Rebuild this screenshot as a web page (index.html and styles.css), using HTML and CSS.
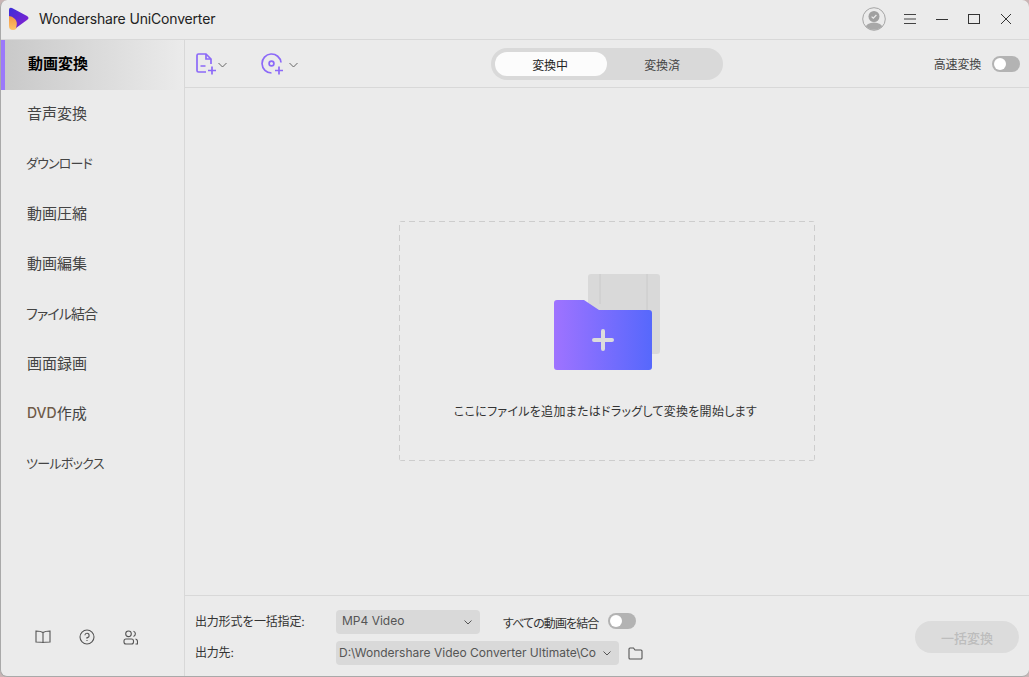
FILE: index.html
```html
<!DOCTYPE html>
<html lang="ja">
    <head>
        <meta charset="UTF-8">
        <meta name="viewport" content="width=device-width, initial-scale=1.0">
        <title>Wondershare UniConverter</title>
        <link rel="stylesheet" href="styles.css">
    </head>
    <body>
        <div class="app">
            <header class="titlebar">
                <svg class="logo" width="22" height="24" viewBox="0 0 22 24">
                    <defs>
                        <linearGradient id="logoOrange" x1="0" y1="0" x2="0" y2="1">
                            <stop offset="0" stop-color="#f08a3c"/>
                            <stop offset="1" stop-color="#fcc56a"/>
                        </linearGradient>
                        <linearGradient id="logoPurple" x1="0" y1="0" x2="1" y2="1">
                            <stop offset="0" stop-color="#3a2fd8"/>
                            <stop offset="1" stop-color="#8a1fd0"/>
                        </linearGradient>
                    </defs>
                    <path d="M1 6V19Q1 23 5 23Q9 23 9 19V10Z" fill="url(#logoOrange)"/>
                    <path d="M1 3Q1 0 4 1L19 9Q22 11 19 13L8 21Q10 15 7 12Q4 9 1 9Z" fill="url(#logoPurple)"/>
                </svg>
                <span class="app-name">Wondershare UniConverter</span>
                <div class="window-controls">
                    <svg class="avatar" width="24" height="24" viewBox="0 0 24 24">
                        <circle cx="12" cy="12" r="11.3" fill="#ebebeb" stroke="#a5a5a5"/>
                        <clipPath id="avatarClip"><circle cx="12" cy="12" r="10.8"/></clipPath>
                        <ellipse cx="12" cy="21" rx="8.500" ry="5.500" fill="#a8a8a8" clip-path="url(#avatarClip)"/>
                        <circle cx="12" cy="9.500" r="5.500" fill="#a0a0a0"/>
                        <path d="M9.600 9.600L11.300 11.200L14.400 8" fill="none" stroke="#ebebeb" stroke-width="1.200"/>
                    </svg>
                    <svg class="menu-icon" width="12" height="10" viewBox="0 0 12 10">
                        <path d="M0 .5H12M0 5H12M0 9.500H12" stroke="#444" fill="none"/>
                    </svg>
                    <svg class="min-icon" width="12" height="12" viewBox="0 0 12 12">
                        <path d="M0 6.500H12" stroke="#333" fill="none"/>
                    </svg>
                    <svg class="max-icon" width="12" height="10" viewBox="0 0 12 10">
                        <rect x=".5" y=".5" width="11" height="9" stroke="#333" fill="none"/>
                    </svg>
                    <svg class="close-icon" width="12" height="12" viewBox="0 0 12 12">
                        <path d="M1 1L11 11M11 1L1 11" stroke="#333" fill="none"/>
                    </svg>
                </div>
            </header>
            <div class="content">
                <aside class="sidebar">
                    <nav class="nav">
                        <a class="nav-item active">動画変換</a>
                        <a class="nav-item">音声変換</a>
                        <a class="nav-item kana download">ダウンロード</a>
                        <a class="nav-item">動画圧縮</a>
                        <a class="nav-item">動画編集</a>
                        <a class="nav-item kana merge">ファイル結合</a>
                        <a class="nav-item">画面録画</a>
                        <a class="nav-item dvd"><b>DVD</b>作成</a>
                        <a class="nav-item kana toolbox">ツールボックス</a>
                    </nav>
                    <div class="side-icons">
                        <svg width="16" height="14" viewBox="0 0 16 14">
                            <path d="M8 2.500C6.500 1.500 3.500 1 1 1V12C3.500 12 6.500 12 8 12.500C9.500 12 12.500 12 15 12V1C12.500 1 9.500 1.500 8 2.500V13" fill="none" stroke="#555" stroke-width="1.100"/>
                        </svg>
                        <svg width="16" height="16" viewBox="0 0 16 16">
                            <circle cx="8" cy="8" r="7" fill="none" stroke="#555" stroke-width="1.100"/>
                            <path d="M5.900 6.300A2.100 2.100 0 1 1 8 8.500V9.800M8 11V12" fill="none" stroke="#555" stroke-width="1.100"/>
                        </svg>
                        <svg width="15" height="15" viewBox="0 0 15 15">
                            <circle cx="5.500" cy="3.800" r="2.800" fill="none" stroke="#555" stroke-width="1.100"/>
                            <rect x="1" y="9" width="9.500" height="5" rx="2" fill="none" stroke="#555" stroke-width="1.100"/>
                            <path d="M10.500 1.200A2.800 2.800 0 0 1 10.500 6.500M12.500 9C14 9.300 14.500 10.500 14.500 11.500V14H12.500" fill="none" stroke="#555" stroke-width="1.100"/>
                        </svg>
                    </div>
                </aside>
                <main class="main">
                    <div class="toolbar">
                        <div class="add-buttons">
                            <button class="icon-button add-file">
                                <svg width="21" height="22" viewBox="0 0 21 22">
                                    <path d="M10 19H2.500Q1 19 1 17.500V2.500Q1 1 2.500 1H10L15 6V11" fill="none" stroke="#8c69f8" stroke-width="1.700"/>
                                    <path d="M10 1V6H15M4.500 13H9.500M12 17.500H20M16 13.500V21.500" fill="none" stroke="#8c69f8" stroke-width="1.700"/>
                                </svg>
                                <svg class="chevron" width="9" height="6" viewBox="0 0 9 6"><path d="M.5 1L4.500 5L8.500 1" fill="none" stroke="#666"/></svg>
                            </button>
                            <button class="icon-button add-disc">
                                <svg width="23" height="22" viewBox="0 0 23 22">
                                    <path d="M20 9.500A9.500 9.500 0 1 0 10.500 20" fill="none" stroke="#8c69f8" stroke-width="1.700"/>
                                    <circle cx="10.500" cy="10.500" r="2.400" fill="none" stroke="#8c69f8" stroke-width="1.700"/>
                                    <path d="M14 17.500H22M18 13.500V21.500" fill="none" stroke="#8c69f8" stroke-width="1.700"/>
                                </svg>
                                <svg class="chevron" width="9" height="6" viewBox="0 0 9 6"><path d="M.5 1L4.500 5L8.500 1" fill="none" stroke="#666"/></svg>
                            </button>
                        </div>
                        <div class="tabs">
                            <span class="tab selected">変換中</span>
                            <span class="tab">変換済</span>
                        </div>
                        <div class="speed">
                            <span>高速変換</span>
                            <span class="switch"></span>
                        </div>
                    </div>
                    <div class="drop-area">
                        <div class="drop-box">
                            <svg class="folder" width="108" height="98" viewBox="0 0 108 98">
                                <defs>
                                    <linearGradient id="folderFill" x1="0" y1="0" x2="1" y2="0">
                                        <stop offset="0" stop-color="#9f73ff"/>
                                        <stop offset="1" stop-color="#5668fc"/>
                                    </linearGradient>
                                </defs>
                                <rect x="34" y="0" width="72" height="80" rx="3" fill="#d9d9d9"/>
                                <path d="M46 0V30M93 0V68" stroke="#cacaca" fill="none"/>
                                <path d="M0 29Q0 26 3 26H30L45 36H95Q98 36 98 39V93Q98 96 95 96H3Q0 96 0 93Z" fill="url(#folderFill)"/>
                                <path d="M40 66H58M49 57V75" stroke="#dcdcdc" stroke-width="4" stroke-linecap="round" fill="none"/>
                            </svg>
                            <p class="drop-text">ここにファイルを追加またはドラッグして変換を開始します</p>
                        </div>
                    </div>
                    <footer class="footer">
                        <div class="footer-labels">
                            <span>出力形式を一括指定:</span>
                            <span>出力先:</span>
                        </div>
                        <div class="footer-fields">
                            <div class="field-row">
                                <div class="select format">
                                    <span>MP4 Video</span>
                                    <svg width="8" height="5" viewBox="0 0 8 5"><path d="M.5 .5L4 4L7.500 .5" fill="none" stroke="#555"/></svg>
                                </div>
                                <span class="merge-label">すべての動画を結合</span>
                                <span class="switch"></span>
                            </div>
                            <div class="field-row">
                                <div class="select path">
                                    <span>D:\Wondershare Video Converter Ultimate\Co</span>
                                    <svg width="8" height="5" viewBox="0 0 8 5"><path d="M.5 .5L4 4L7.500 .5" fill="none" stroke="#555"/></svg>
                                </div>
                                <svg class="folder-icon" width="15" height="13" viewBox="0 0 15 13">
                                    <path d="M1 2Q1 1 2 1H5.500L7 3H13Q14 3 14 4V11Q14 12 13 12H2Q1 12 1 11Z" fill="none" stroke="#555" stroke-width="1.100"/>
                                </svg>
                            </div>
                        </div>
                        <button class="convert-all" disabled>一括変換</button>
                    </footer>
                </main>
            </div>
        </div>
    </body>
</html>
```

FILE: styles.css
```css
:root{
    --bg: #ebebeb;
    --line: #d8d8d8;
    --pill: #d9d9d9;
    --purple: #9b78fb;
    --dash: #cdcdcd;
}
*{
    box-sizing: border-box;
}
html, body{
    margin: 0;
    height: 100%;
    background-color: #c9b5b5;
}
body{
    font-family: Inter, "Noto Sans CJK JP", sans-serif;
    font-size: 12px;
    color: #333;
    overflow: hidden;
}
.app{
    display: flex;
    flex-direction: column;
    width: 1029px;
    height: 677px;
    background-color: var(--bg);
    border-left: 1px solid #a9a9a9;
    border-bottom: 1px solid #a9a9a9;
    border-radius: 7px;
    overflow: hidden;
}

/* title bar */
.titlebar{
    display: flex;
    align-items: center;
    flex: none;
    height: 40px;
    padding: 0 17px 2px 7px;
    border-bottom: 1px solid var(--line);
}
.logo{
    margin-right: 9px;
}
.app-name{
    font-size: 14px;
    letter-spacing: -.17px;
    color: #222;
}
.window-controls{
    display: flex;
    align-items: center;
    margin-left: auto;
}
.avatar{
    margin-right: 18px;
}
.menu-icon,
.min-icon,
.max-icon{
    margin-right: 20px;
}

/* sidebar */
.content{
    display: flex;
    flex: 1;
    min-height: 0;
}
.sidebar{
    display: flex;
    flex-direction: column;
    flex: none;
    width: 184px;
    border-right: 1px solid var(--line);
}
.nav{
    display: flex;
    flex-direction: column;
}
.nav-item{
    display: flex;
    align-items: center;
    height: 50px;
    padding: 0 0 5px 26px;
    font-size: 15px;
    color: #444;
}
.nav-item.kana{
    padding-left: 25px;
    font-feature-settings: "palt";
}
.nav-item.download{
    font-size: 13px;
    letter-spacing: -.8px;
}
.nav-item.merge{
    font-size: 14px;
    letter-spacing: -.9px;
}
.nav-item.toolbox{
    font-size: 13px;
    letter-spacing: -.7px;
}
.nav-item.active{
    padding-left: 23px;
    border-left: 4px solid var(--purple);
    background: linear-gradient(90deg, #c9c9c9, #ebebeb);
    font-weight: 700;
    color: #000;
}
.dvd b{
    font-size: 14px;
    font-weight: 500;
    color: #6f5a48;
}
.side-icons{
    display: flex;
    align-items: center;
    gap: 28px;
    margin-top: auto;
    padding: 0 0 31px 34px;
}

/* toolbar */
.main{
    display: flex;
    flex-direction: column;
    flex: 1;
    min-width: 0;
}
.toolbar{
    position: relative;
    display: flex;
    align-items: center;
    justify-content: space-between;
    flex: none;
    height: 48px;
    padding: 0 9px 0 11px;
    border-bottom: 1px solid var(--line);
}
.add-buttons{
    display: flex;
    gap: 34px;
}
.icon-button{
    display: flex;
    align-items: center;
    gap: 1px;
    padding: 0;
    border: none;
    background: none;
}
.add-disc{
    gap: 5px;
}
.chevron{
    margin-top: 3px;
}
.tabs{
    position: absolute;
    left: 306px;
    top: 8px;
    display: flex;
    width: 232px;
    height: 32px;
    padding: 4px;
    border-radius: 16px;
    background-color: var(--pill);
}
.tab{
    display: flex;
    align-items: center;
    justify-content: center;
    width: 112px;
    height: 24px;
    padding-right: 2px;
    border-radius: 12px;
    color: #444;
    letter-spacing: -.2px;
}
.tab.selected{
    background-color: #fcfcfc;
    color: #222;
}
.speed{
    display: flex;
    align-items: center;
    gap: 11px;
    color: #444;
    letter-spacing: -.2px;
}
.switch{
    display: block;
    position: relative;
    width: 28px;
    height: 16px;
    border-radius: 8px;
    background-color: #b3b3b3;
}
.field-row .switch{
    margin-bottom: 2px;
}
.switch::before{
    content: "";
    position: absolute;
    left: 2px;
    top: 2px;
    width: 12px;
    height: 12px;
    border-radius: 50%;
    background-color: #fff;
}

/* drop zone */
.drop-area{
    flex: 1;
    min-height: 0;
    padding: 133px 0 0 214px;
}
.drop-box{
    display: flex;
    flex-direction: column;
    align-items: center;
    width: 416px;
    height: 240px;
    padding-top: 53px;
    border-radius: 3px;
    background:
        repeating-linear-gradient(90deg, var(--dash) 0 6px, transparent 6px 10px) top / 100% 1px no-repeat,
        repeating-linear-gradient(90deg, var(--dash) 0 6px, transparent 6px 10px) bottom / 100% 1px no-repeat,
        repeating-linear-gradient(0deg, var(--dash) 0 6px, transparent 6px 10px) left / 1px 100% no-repeat,
        repeating-linear-gradient(0deg, var(--dash) 0 6px, transparent 6px 10px) right / 1px 100% no-repeat;
}
.folder{
    margin-left: 2px;
}
.drop-text{
    margin: 30px 3px 0 0;
    font-feature-settings: "palt";
    letter-spacing: .28px;
    color: #333;
}

/* footer */
.footer{
    display: flex;
    flex: none;
    height: 81px;
    padding: 14px 10px 0 10px;
    border-top: 1px solid var(--line);
}
.footer-labels{
    display: flex;
    flex-direction: column;
    gap: 13px;
    width: 141px;
    padding-top: 3px;
    letter-spacing: -.2px;
    color: #333;
}
.footer-labels span{
    line-height: 18px;
}
.footer-fields{
    display: flex;
    flex-direction: column;
    gap: 7px;
}
.field-row{
    display: flex;
    align-items: center;
    height: 24px;
}
.select{
    display: flex;
    align-items: center;
    justify-content: space-between;
    height: 24px;
    border-radius: 4px;
    background-color: var(--pill);
    color: #555;
}
.select span{
    margin-top: -2px;
}
.select.format span{
    margin-top: -4px;
}
.select.format{
    width: 144px;
    padding: 0 8px 0 6px;
}
.select.path{
    width: 283px;
    padding: 0 8px 0 3px;
    white-space: nowrap;
}
.merge-label{
    margin: 1px 10px 0 23px;
    font-feature-settings: "palt";
    letter-spacing: -.9px;
}
.folder-icon{
    margin-left: 9px;
}
.convert-all{
    align-self: flex-start;
    width: 104px;
    height: 32px;
    margin: 11px 0 0 auto;
    border: none;
    border-radius: 16px;
    background-color: #dcdcdc;
    font-family: inherit;
    font-size: 13px;
    font-weight: 500;
    color: #bdbdbd;
}
```
